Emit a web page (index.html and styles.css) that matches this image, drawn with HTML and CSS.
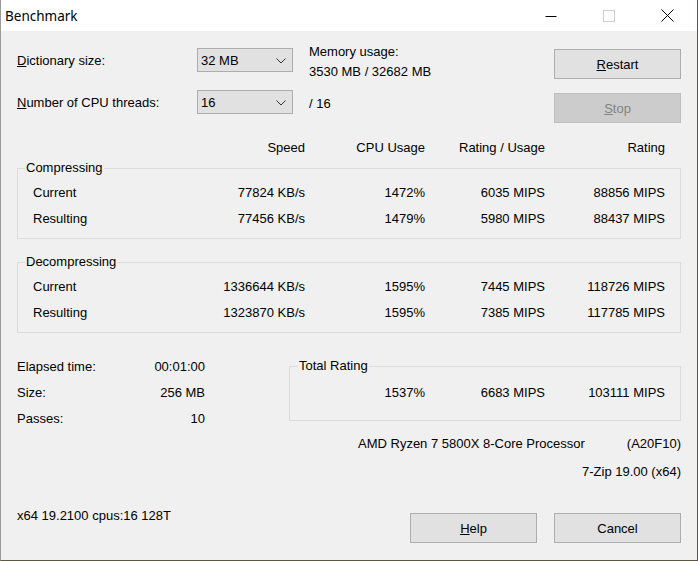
FILE: index.html
```html
<!DOCTYPE html>
<html>
<head>
<meta charset="utf-8">
<title>Benchmark</title>
<link rel="stylesheet" href="styles.css">
</head>
<body>
<div class="window">
  <div class="titlebar">
    <span class="title">Benchmark</span>
    <div class="caption-buttons">
      <span class="cap"><svg width="12" height="12" viewBox="0 0 12 12"><path d="M0.5 6.5H11.5" stroke="#000" stroke-width="1"/></svg></span>
      <span class="cap"><svg width="12" height="12" viewBox="0 0 12 12"><rect x="0.5" y="0.5" width="11" height="11" fill="none" stroke="#cccccc" stroke-width="1"/></svg></span>
      <span class="cap"><svg width="13" height="13" viewBox="0 0 13 13"><path d="M0.5 0.5L12.5 12.5M12.5 0.5L0.5 12.5" stroke="#000" stroke-width="1"/></svg></span>
    </div>
  </div>
  <div class="content">
    <div class="top">
      <div class="settings">
        <div class="field">
          <span class="field-label"><u>D</u>ictionary size:</span>
          <div class="combo"><span>32 MB</span><svg class="chevron" width="10" height="6" viewBox="0 0 10 6"><path d="M0.5 0.5L5 5L9.5 0.5" fill="none" stroke="#333" stroke-width="1"/></svg></div>
        </div>
        <div class="field field-second">
          <span class="field-label"><u>N</u>umber of CPU threads:</span>
          <div class="combo"><span>16</span><svg class="chevron" width="10" height="6" viewBox="0 0 10 6"><path d="M0.5 0.5L5 5L9.5 0.5" fill="none" stroke="#333" stroke-width="1"/></svg></div>
        </div>
      </div>
      <div class="memory">
        <div class="line">Memory usage:</div>
        <div class="line">3530 MB / 32682 MB</div>
        <div class="line threads">/ 16</div>
      </div>
      <div class="actions">
        <div class="btn"><u>R</u>estart</div>
        <div class="btn disabled"><u>S</u>top</div>
      </div>
    </div>

    <div class="cols header">
      <span></span>
      <span class="num">Speed</span>
      <span class="num">CPU Usage</span>
      <span class="num">Rating / Usage</span>
      <span class="num">Rating</span>
    </div>

    <fieldset class="group">
      <legend>Compressing</legend>
      <div class="cols row">
        <span>Current</span>
        <span class="num">77824 KB/s</span>
        <span class="num">1472%</span>
        <span class="num">6035 MIPS</span>
        <span class="num">88856 MIPS</span>
      </div>
      <div class="cols row">
        <span>Resulting</span>
        <span class="num">77456 KB/s</span>
        <span class="num">1479%</span>
        <span class="num">5980 MIPS</span>
        <span class="num">88437 MIPS</span>
      </div>
    </fieldset>

    <fieldset class="group group-second">
      <legend>Decompressing</legend>
      <div class="cols row">
        <span>Current</span>
        <span class="num">1336644 KB/s</span>
        <span class="num">1595%</span>
        <span class="num">7445 MIPS</span>
        <span class="num">118726 MIPS</span>
      </div>
      <div class="cols row">
        <span>Resulting</span>
        <span class="num">1323870 KB/s</span>
        <span class="num">1595%</span>
        <span class="num">7385 MIPS</span>
        <span class="num">117785 MIPS</span>
      </div>
    </fieldset>

    <div class="bottom">
      <div class="stats">
        <span>Elapsed time:</span><span class="num">00:01:00</span>
        <span>Size:</span><span class="num">256 MB</span>
        <span>Passes:</span><span class="num">10</span>
      </div>
      <fieldset class="total">
        <legend>Total Rating</legend>
        <div class="total-row">
          <span></span>
          <span class="num">1537%</span>
          <span class="num">6683 MIPS</span>
          <span class="num">103111 MIPS</span>
        </div>
      </fieldset>
    </div>

    <div class="cpu">
      <span>AMD Ryzen 7 5800X 8-Core Processor</span>
      <span>(A20F10)</span>
    </div>
    <div class="version">7-Zip 19.00 (x64)</div>

    <div class="footer">
      <span class="sysinfo">x64 19.2100 cpus:16 128T</span>
      <div class="footer-buttons">
        <div class="btn"><u>H</u>elp</div>
        <div class="btn">Cancel</div>
      </div>
    </div>
  </div>
</div>
</body>
</html>
```

FILE: styles.css
```css
html, body {
  margin: 0;
  padding: 0;
  background: #3a3528;
}

.window {
  width: 698px;
  height: 561px;
  box-sizing: border-box;
  background: #f0f0f0;
  border-left: 1px solid #9a9a9a;
  border-right: 1px solid #5e5545;
  border-bottom: 1px solid #5e5545;
  overflow: hidden;
  font-family: "Liberation Sans", Arial, sans-serif;
  font-size: 13px;
  color: #000;
}

.titlebar {
  height: 31px;
  background: #ffffff;
  display: flex;
  align-items: center;
}

.title {
  font-family: "Noto Sans", "Open Sans", sans-serif;
  font-size: 13.5px;
  margin-left: 4px;
  margin-top: 1px;
}

.caption-buttons {
  margin-left: auto;
  margin-right: 1px;
  display: flex;
  height: 31px;
}

.cap {
  width: 58px;
  height: 31px;
  display: flex;
  align-items: center;
  justify-content: center;
}

.cap svg {
  display: block;
}

.content {
  padding: 0 16px;
}

.top {
  display: flex;
  align-items: flex-start;
}

.settings {
  margin-top: 17px;
}

.field {
  display: flex;
  align-items: center;
  height: 24px;
}

.field-second {
  margin-top: 18px;
}

.field-label {
  width: 180px;
}

.combo {
  width: 96px;
  height: 24px;
  box-sizing: border-box;
  border: 1px solid #adadad;
  background: #e1e1e1;
  display: flex;
  align-items: center;
  padding-left: 3px;
}

.chevron {
  margin-left: auto;
  margin-right: 6px;
  margin-top: 1px;
}

.memory {
  margin-left: 16px;
  margin-top: 11px;
}

.line {
  line-height: 20px;
}

.threads {
  margin-top: 12px;
}

.actions {
  margin-left: auto;
  margin-top: 18px;
  display: flex;
  flex-direction: column;
  gap: 14px;
}

.btn {
  width: 127px;
  height: 30px;
  box-sizing: border-box;
  border: 1px solid #adadad;
  background: #e1e1e1;
  display: flex;
  align-items: center;
  justify-content: center;
}

.btn.disabled {
  background: #cccccc;
  border-color: #bfbfbf;
  color: #838383;
}

.cols {
  display: grid;
  grid-template-columns: 152px repeat(4, 120px);
  align-items: center;
}

.num {
  text-align: right;
}

.header {
  margin-top: 15px;
  margin-left: 16px;
  line-height: 20px;
}

.group {
  margin: 2px 0 0 0;
  padding: 3px 15px 7px 7px;
  border: 1px solid #dcdcdc;
  min-width: 0;
}

.group legend,
.total legend {
  padding: 0 1px;
  line-height: 16px;
}

.group-second {
  margin-top: 15px;
}

.row {
  height: 26px;
  padding-left: 8px;
}

.bottom {
  display: flex;
  align-items: flex-start;
}

.stats {
  width: 188px;
  margin-top: 20px;
  display: grid;
  grid-template-columns: 1fr auto;
  grid-auto-rows: 26px;
  align-items: center;
}

.total {
  flex: 1;
  margin: 25px 0 0 84px;
  padding: 5px 15px 15px 8px;
  border: 1px solid #dcdcdc;
  min-width: 0;
}

.total-row {
  display: grid;
  grid-template-columns: 1fr 120px 120px 120px;
  height: 26px;
  align-items: center;
}

.cpu {
  margin-top: 3px;
  padding-left: 341px;
  display: flex;
  justify-content: space-between;
  line-height: 20px;
}

.version {
  margin-top: 8px;
  text-align: right;
  line-height: 20px;
}

.footer {
  margin-top: 24px;
  display: flex;
  align-items: flex-start;
}

.sysinfo {
  line-height: 20px;
}

.footer-buttons {
  margin-left: auto;
  margin-top: 7px;
  display: flex;
  gap: 17px;
}
```
